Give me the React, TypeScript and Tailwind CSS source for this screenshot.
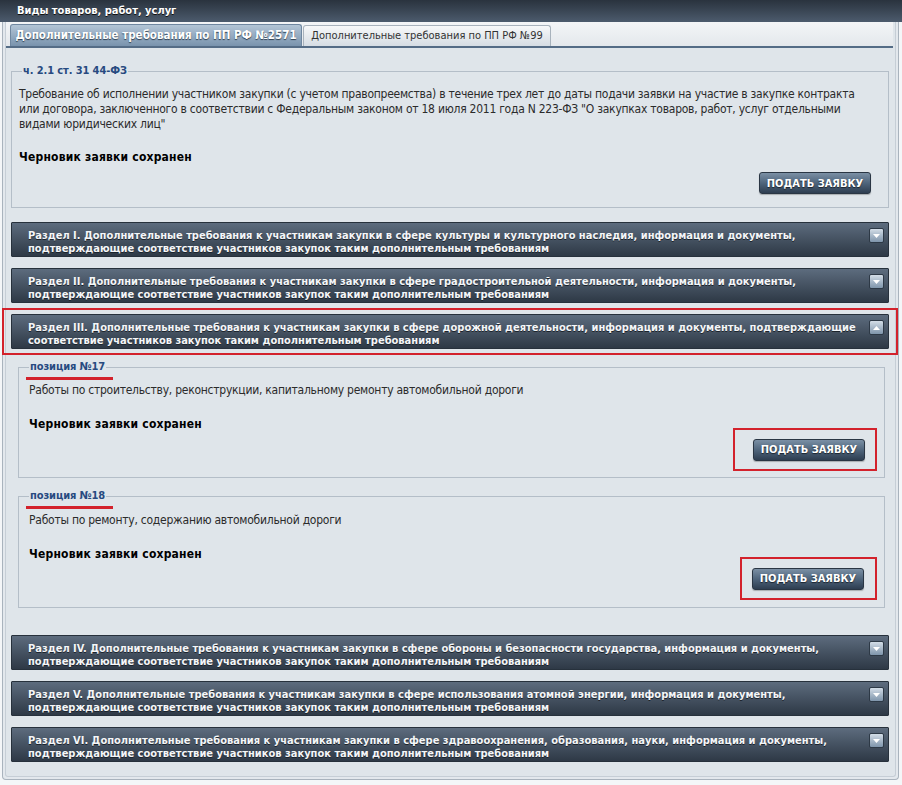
import React from "react"

const FONT = "font-['DejaVu_Sans_Condensed','DejaVu_Sans',Tahoma,sans-serif]"

const SECTIONS_TOP = [
  {
    id: "I",
    lines: [
      "Раздел I. Дополнительные требования к участникам закупки в сфере культуры и культурного наследия, информация и документы,",
      "подтверждающие соответствие участников закупок таким дополнительным требованиям",
    ],
  },
  {
    id: "II",
    lines: [
      "Раздел II. Дополнительные требования к участникам закупки в сфере градостроительной деятельности, информация и документы,",
      "подтверждающие соответствие участников закупок таким дополнительным требованиям",
    ],
  },
]

const SECTIONS_BOTTOM = [
  {
    id: "IV",
    lines: [
      "Раздел IV. Дополнительные требования к участникам закупки в сфере обороны и безопасности государства, информация и документы,",
      "подтверждающие соответствие участников закупок таким дополнительным требованиям",
    ],
  },
  {
    id: "V",
    lines: [
      "Раздел V. Дополнительные требования к участникам закупки в сфере использования атомной энергии, информация и документы,",
      "подтверждающие соответствие участников закупок таким дополнительным требованиям",
    ],
  },
  {
    id: "VI",
    lines: [
      "Раздел VI. Дополнительные требования к участникам закупки в сфере здравоохранения, образования, науки, информация и документы,",
      "подтверждающие соответствие участников закупок таким дополнительным требованиям",
    ],
  },
]

const ToggleIcon = ({ up }: { up?: boolean }) => (
  <div className="w-[15px] h-[15px] shrink-0 rounded-[2px] border border-[#2d3946] bg-gradient-to-b from-[#d3dde7] to-[#7f95ab] flex items-center justify-center">
    <svg width="7" height="4" viewBox="0 0 7 4">
      {up ? (
        <polygon points="0,4 7,4 3.5,0" fill="#ffffff" />
      ) : (
        <polygon points="0,0 7,0 3.5,4" fill="#ffffff" />
      )}
    </svg>
  </div>
)

const SectionBar = ({ lines, up }: { lines: string[]; up?: boolean }) => (
  <div className="h-[35px] flex items-start justify-between pl-[16px] pr-[4px] pt-[5px] border border-[#27313c] bg-gradient-to-b from-[#5d6c7e] to-[#2e3946] rounded-[1px]">
    <div className="text-[#f4f6f8] font-bold text-[11px] leading-[13px] whitespace-nowrap pt-[1px] [text-shadow:0_1px_0_#1b232b]">
      {lines.map((l) => (
        <div key={l}>{l}</div>
      ))}
    </div>
    <ToggleIcon up={up} />
  </div>
)

const SubmitButton = () => (
  <button className="h-[22px] w-[112px] shrink-0 rounded-[3px] border border-[#2a3644] bg-gradient-to-b from-[#7b90a5] via-[#4f657c] to-[#2e3e51] text-white font-bold text-[11px] leading-none whitespace-nowrap [text-shadow:0_1px_1px_#1a232d] shadow-[0_1px_1px_rgba(0,0,0,0.25)]">
    ПОДАТЬ ЗАЯВКУ
  </button>
)

const Legend = ({ children, underline, className }: { children: React.ReactNode; underline?: boolean; className?: string }) => (
  <legend className={`px-[1px] relative text-[#274a80] font-bold text-[11px] leading-[14px] tracking-[-0.1px] ${className ?? ""}`}>
    {children}
    {underline && (
      <span className="absolute left-[-3px] right-[-7px] top-[17px] h-[3px] bg-[#d3222c]" />
    )}
  </legend>
)

const Position = ({
  num,
  text,
  textMt,
  boxClass,
  pb,
}: {
  num: string
  text: string
  textMt: string
  boxClass: string
  pb: string
}) => (
  <fieldset className={`border border-[#b4bec8] ml-[7px] mr-[4px] pl-[10px] pr-[18px] ${pb}`}>
    <Legend underline>позиция №{num}</Legend>
    <div className={`text-[#2b2b2b] text-[12px] leading-[15px] tracking-[-0.25px] whitespace-nowrap ${textMt}`}>{text}</div>
    <div className="text-black font-bold text-[12px] leading-[15px] tracking-[0.2px] mt-[19px]">Черновик заявки сохранен</div>
    <div className="flex justify-end -mt-[4px] -mr-[11px]">
      <div className={`border-2 border-[#d3222c] flex items-center justify-end ${boxClass}`}>
        <SubmitButton />
      </div>
    </div>
  </fieldset>
)

export default function App() {
  return (
    <div className={`w-[902px] h-[785px] bg-[#f4f6f8] ${FONT} overflow-hidden`}>
      <div className="h-[22px] bg-gradient-to-b from-[#2a333e] to-[#4c5b6d] text-white font-bold text-[11px] leading-[22px] pl-[17px] [text-shadow:0_1px_0_#111]">
        Виды товаров, работ, услуг
      </div>
      <div className="ml-[2px] mr-[3px] h-[758px] border border-t-0 border-[#a9b3bd] rounded-b-[4px] bg-[#e3e8ed] p-[2px] pt-0">
        <div className="h-[755px] border-x border-b border-[#c6ced6] rounded-b-[3px] bg-[#dfe5ea] pr-[2px]">
          {/* tabs */}
          <div className="h-[26px] pt-[3px] pl-[4px] flex items-end gap-[1px] bg-gradient-to-b from-[#f3f5f7] to-[#e4e8ec] border-b-2 border-[#546c86]">
            <div className="h-[22px] w-[292px] rounded-t-[3px] border border-b-0 border-[#6f87a0] bg-gradient-to-b from-[#b3c5d6] to-[#7993ad] text-white font-bold text-[11.5px] leading-[21px] text-center whitespace-nowrap [text-shadow:0_1px_1px_#2c3d4f]">
              Дополнительные требования по ПП РФ №2571
            </div>
            <div className="h-[21px] w-[248px] rounded-t-[3px] border border-b-0 border-[#a8b2bc] bg-gradient-to-b from-[#f7f8f9] to-[#d6dde4] text-[#333] text-[11px] leading-[20px] text-center whitespace-nowrap">
              Дополнительные требования по ПП РФ №99
            </div>
          </div>

          <div className="pl-[5px] pr-[4px]">
            {/* main requirement */}
            <fieldset className="mt-[16px] border border-[#b4bec8] pl-[7px] pr-[17px] pb-[13px]">
              <Legend className="ml-[3px]">ч. 2.1 ст. 31 44-ФЗ</Legend>
              <div className="text-[#2b2b2b] text-[12px] leading-[15px] tracking-[-0.25px] whitespace-nowrap mt-[9px]">
                Требование об исполнении участником закупки (с учетом правопреемства) в течение трех лет до даты подачи заявки на участие в закупке контракта
                <br />
                или договора, заключенного в соответствии с Федеральным законом от 18 июля 2011 года N 223-ФЗ "О закупках товаров, работ, услуг отдельными
                <br />
                видами юридических лиц"
              </div>
              <div className="text-black font-bold text-[12px] leading-[15px] tracking-[0.2px] mt-[18px]">Черновик заявки сохранен</div>
              <div className="flex justify-end mt-[7px]">
                <SubmitButton />
              </div>
            </fieldset>

            <div className="mt-[14px] flex flex-col gap-[11px]">
              {SECTIONS_TOP.map((s) => (
                <SectionBar key={s.id} lines={s.lines} />
              ))}
            </div>

            {/* expanded section III */}
            <div className="mt-[5px] -ml-[9px] -mr-[9px] border-2 border-[#d3222c] px-[7px] py-[4px]">
              <SectionBar
                up
                lines={[
                  "Раздел III. Дополнительные требования к участникам закупки в сфере дорожной деятельности, информация и документы, подтверждающие",
                  "соответствие участников закупок таким дополнительным требованиям",
                ]}
              />
            </div>

            <div className="flex flex-col gap-[11px] mt-[5px]">
              <Position
                num="17"
                text="Работы по строительству, реконструкции, капитальному ремонту автомобильной дороги"
                textMt="mt-[9px]"
                boxClass="w-[144px] h-[43px] pr-[10px]"
                pb="pb-[6px]"
              />
              <Position
                num="18"
                text="Работы по ремонту, содержанию автомобильной дороги"
                textMt="mt-[10px]"
                boxClass="w-[137px] h-[43px] pr-[11px] -mt-[1px]"
                pb="pb-[7px]"
              />
            </div>

            <div className="mt-[27px] flex flex-col gap-[11px]">
              {SECTIONS_BOTTOM.map((s) => (
                <SectionBar key={s.id} lines={s.lines} />
              ))}
            </div>
          </div>
        </div>
      </div>
    </div>
  )
}
